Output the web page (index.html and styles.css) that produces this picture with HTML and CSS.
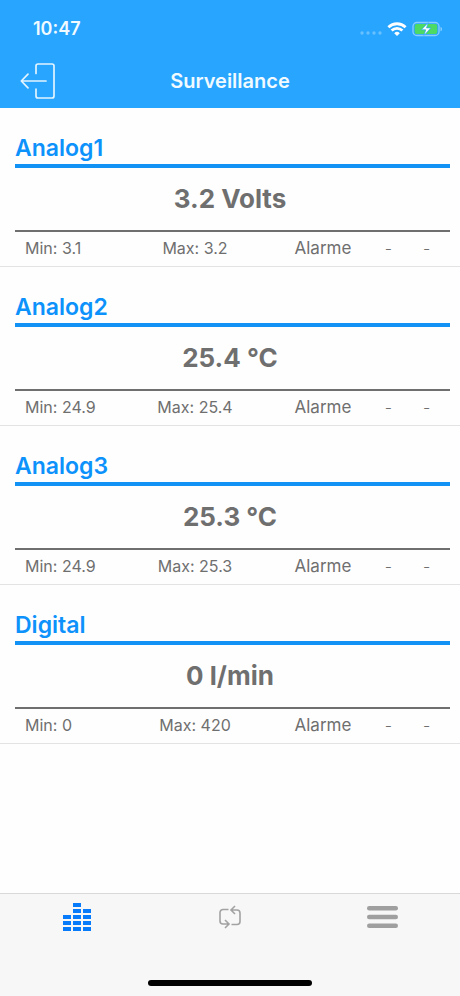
FILE: index.html
```html
<!DOCTYPE html>
<html lang="fr">
<head>
<meta charset="utf-8">
<meta name="viewport" content="width=device-width, initial-scale=1">
<title>Surveillance</title>
<link rel="stylesheet" href="styles.css">
</head>
<body>
<div class="app">
  <header class="header">
    <div class="status">
      <time class="clock">10:47</time>
      <div class="indicators">
        <svg width="22" height="4" viewBox="0 0 22 4" fill="#fff" fill-opacity=".3" aria-hidden="true"><circle cx="2" cy="2" r="1.7"/><circle cx="8" cy="2" r="1.7"/><circle cx="14" cy="2" r="1.7"/><circle cx="20" cy="2" r="1.7"/></svg>
        <svg width="20" height="14" viewBox="0 0 20 14" fill="none" stroke="#fff" stroke-width="2.8" aria-hidden="true"><path d="M1.400 5.200a12.400 12.400 0 0 1 17.200 0"/><path d="M4.600 8.600a7.800 7.800 0 0 1 10.800 0"/><path d="M10 14 7.200 11.200a4 4 0 0 1 5.600 0Z" fill="#fff" stroke="none"/></svg>
        <svg width="31" height="16" viewBox="0 0 31 16" aria-hidden="true"><rect x="1" y="1.500" width="26" height="13" rx="3.800" fill="none" stroke="#fff" stroke-opacity=".45" stroke-width="1.300"/><rect x="2.700" y="3" width="22.600" height="10" rx="2" fill="#4cd964"/><path d="M28.500 5.700c2 .8 2 3.800 0 4.600z" fill="#fff" fill-opacity=".45"/><path d="M16.200 1.500 9.500 8.800h4.200L12 14.500l6.800-7.600h-4.300z" fill="#fff" stroke="#28a5ff" stroke-width=".7"/></svg>
      </div>
    </div>
    <nav class="navbar">
      <button class="exit" type="button" aria-label="Quitter">
        <svg width="36" height="38" viewBox="0 0 36 38" fill="none" stroke="#e2f4ff" stroke-width="1.700" stroke-linecap="round" stroke-linejoin="round" aria-hidden="true"><path d="M16 11.500V4a2 2 0 0 1 2-2H32a2 2 0 0 1 2 2V34a2 2 0 0 1-2 2H18a2 2 0 0 1-2-2V27"/><path d="M26 19H1.500M8 12.200 1.300 19 8 25.800"/></svg>
      </button>
      <h1 class="heading">Surveillance</h1>
    </nav>
  </header>
  <main class="channels">
    <section class="channel">
      <h2 class="name">Analog1</h2>
      <p class="value">3.2 Volts</p>
      <div class="details"><span>Min: 3.1</span><span class="max">Max: 3.2</span><span class="alarm">Alarme</span><span class="dash">-</span><span class="dash">-</span></div>
    </section>
    <section class="channel">
      <h2 class="name">Analog2</h2>
      <p class="value">25.4 °C</p>
      <div class="details"><span>Min: 24.9</span><span class="max">Max: 25.4</span><span class="alarm">Alarme</span><span class="dash">-</span><span class="dash">-</span></div>
    </section>
    <section class="channel">
      <h2 class="name">Analog3</h2>
      <p class="value">25.3 °C</p>
      <div class="details"><span>Min: 24.9</span><span class="max">Max: 25.3</span><span class="alarm">Alarme</span><span class="dash">-</span><span class="dash">-</span></div>
    </section>
    <section class="channel">
      <h2 class="name">Digital</h2>
      <p class="value">0 l/min</p>
      <div class="details"><span>Min: 0</span><span class="max">Max: 420</span><span class="alarm">Alarme</span><span class="dash">-</span><span class="dash">-</span></div>
    </section>
  </main>
  <footer class="footer">
    <nav class="tabs">
      <button class="tab" type="button" aria-label="Surveillance" aria-current="page">
        <svg width="28" height="28" viewBox="0 0 28 28" fill="#087bfa" aria-hidden="true"><path d="M0 12h8v4H0zM0 18h8v4H0zM0 24h8v4H0zM10 0h8v4h-8zM10 6h8v4h-8zM10 12h8v4h-8zM10 18h8v4h-8zM10 24h8v4h-8zM20 6h8v4h-8zM20 12h8v4h-8zM20 18h8v4h-8zM20 24h8v4h-8z"/></svg>
      </button>
      <button class="tab" type="button" aria-label="Actualiser">
        <svg width="22" height="24" viewBox="0 0 22 24" fill="none" stroke="#a2a2a2" stroke-width="1.600" aria-hidden="true"><path d="M9.500 4.500H4a3 3 0 0 0-3 3V16a3 3 0 0 0 3 3h5M12.500 19.500H18a3 3 0 0 0 3-3V8a3 3 0 0 0-3-3H13M16 1l-4 4 4 4M6 15l4 4-4 4"/></svg>
      </button>
      <button class="tab" type="button" aria-label="Menu">
        <svg width="32" height="24" viewBox="0 0 32 24" fill="#9f9f9f" aria-hidden="true"><rect y="1" width="31" height="4.400" rx="2.200"/><rect y="9.800" width="31" height="4.400" rx="2.200"/><rect y="18.600" width="31" height="4.400" rx="2.200"/></svg>
      </button>
    </nav>
    <div class="home-bar"></div>
  </footer>
</div>
</body>
</html>
```

FILE: styles.css
```css
* {
  box-sizing: border-box;
}

body {
  margin: 0;
  background: #fefefe;
  color: #6f6f6f;
  font-family: Inter, "Liberation Sans", sans-serif;
}

h1, h2, p {
  margin: 0;
}

button {
  padding: 0;
  border: 0;
  background: none;
  cursor: pointer;
}

svg {
  display: block;
}

.app {
  display: flex;
  flex-direction: column;
  min-height: 100vh;
}

.header {
  background: #28a5ff;
  color: #f0faff;
}

.status {
  display: flex;
  align-items: center;
  justify-content: space-between;
  height: 54px;
  padding: 3px 17px 0 33px;
}

.clock {
  font-size: 18px;
  font-weight: 600;
}

.indicators {
  display: flex;
  align-items: center;
  gap: 5px;
}

.indicators svg:first-child {
  margin-top: 8px;
}

.navbar {
  display: grid;
  grid-template-columns: 1fr auto 1fr;
  align-items: center;
  height: 54px;
  padding: 0 20px;
}

.exit {
  justify-self: start;
}

.heading {
  font-size: 20px;
  font-weight: 600;
}

.channels {
  flex: 1;
}

.channel {
  padding: 24px 10px 0 15px;
  border-bottom: 1px solid #e3e3e5;
}

.name {
  height: 36px;
  border-bottom: 4px solid #1292f5;
  color: #0d92fb;
  font-size: 23px;
  font-weight: 600;
  line-height: 32px;
}

.value {
  height: 64px;
  padding-right: 5px;
  border-bottom: 2px solid #6f6f6f;
  font-size: 26px;
  font-weight: 700;
  line-height: 62px;
  text-align: center;
}

.details {
  display: grid;
  grid-template-columns: 26% 28% 27% 9% 9%;
  height: 34px;
  padding-left: 10px;
  font-size: 16px;
  line-height: 32px;
}

.max,
.dash {
  text-align: center;
}

.alarm {
  padding-left: 40px;
  font-size: 17px;
}

.dash {
  font-weight: 300;
}

.footer {
  display: flex;
  flex-direction: column;
  justify-content: space-between;
  align-items: center;
  height: 103px;
  padding-bottom: 10px;
  border-top: 1px solid #d9d9d9;
  background: #f7f7f7;
}

.tabs {
  display: grid;
  grid-template-columns: repeat(3, 1fr);
  width: 100%;
  height: 46px;
}

.tab {
  display: flex;
  align-items: center;
  justify-content: center;
}

.home-bar {
  width: 164px;
  height: 6px;
  border-radius: 3px;
  background: #000;
}
```
